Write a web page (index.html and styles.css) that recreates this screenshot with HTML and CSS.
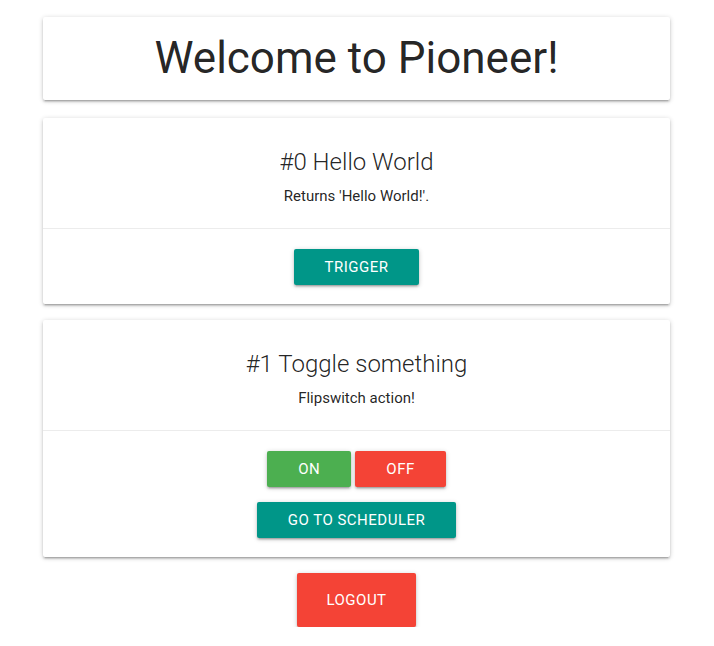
FILE: index.html
```html
<!DOCTYPE html>
<html>
<head>
<meta charset="utf-8">
<title>Pioneer</title>
<link rel="stylesheet" href="styles.css">
</head>
<body>
<div class="page">
  <div class="card header-card">
    <h1 class="page-title">Welcome to Pioneer!</h1>
  </div>

  <div class="card">
    <div class="card-content">
      <h2 class="card-title">#0 Hello World</h2>
      <p class="card-text">Returns 'Hello World!'.</p>
    </div>
    <div class="card-action">
      <button class="btn btn-teal">Trigger</button>
    </div>
  </div>

  <div class="card">
    <div class="card-content">
      <h2 class="card-title">#1 Toggle something</h2>
      <p class="card-text">Flipswitch action!</p>
    </div>
    <div class="card-action">
      <div class="btn-row">
        <button class="btn btn-green">On</button>
        <button class="btn btn-red">Off</button>
      </div>
      <button class="btn btn-teal">Go to scheduler</button>
    </div>
  </div>

  <div class="logout-row">
    <button class="btn btn-large btn-red">Logout</button>
  </div>
</div>
</body>
</html>
```

FILE: styles.css
```css
* { box-sizing: border-box; }

html, body {
  margin: 0;
  padding: 0;
  background: #ffffff;
  font-family: Roboto, "Noto Sans", sans-serif;
  color: rgba(0, 0, 0, 0.87);
}

.page {
  padding: 17px 44px 0 43px;
  display: flex;
  flex-direction: column;
}

.card {
  background: #fff;
  border-radius: 2px;
  box-shadow: 0 2px 2px 0 rgba(0,0,0,0.14), 0 3px 1px -2px rgba(0,0,0,0.12), 0 1px 5px 0 rgba(0,0,0,0.2);
  margin-bottom: 16px;
}

.header-card {
  margin-bottom: 18px;
  height: 83px;
}

.page-title {
  margin: 0;
  font-size: 44px;
  line-height: 83px;
  font-weight: 400;
  text-align: center;
}

.card-content {
  padding: 28px 24px 21px;
  text-align: center;
}

.card-title {
  margin: 0 0 7px;
  font-size: 24px;
  line-height: 32px;
  font-weight: 300;
}

.card-text {
  margin: 0;
  font-size: 15px;
  line-height: 22px;
}

.card-action {
  border-top: 1px solid rgba(160,160,160,0.2);
  padding: 20px 24px 19px;
  display: flex;
  flex-direction: column;
  align-items: center;
  gap: 15px;
}

.btn-row {
  display: flex;
  gap: 4px;
}

.btn {
  border: none;
  border-radius: 2px;
  height: 36px;
  line-height: 36px;
  padding: 0 31px;
  font-family: Roboto, "Noto Sans", sans-serif;
  font-size: 15px;
  letter-spacing: 0.5px;
  text-transform: uppercase;
  color: #fff;
  box-shadow: 0 2px 2px 0 rgba(0,0,0,0.14), 0 3px 1px -2px rgba(0,0,0,0.12), 0 1px 5px 0 rgba(0,0,0,0.2);
  cursor: pointer;
}

.btn-teal { background: #009688; }
.btn-green { background: #4caf50; }
.btn-red { background: #f44336; }

.btn-large {
  height: 54px;
  line-height: 54px;
  padding: 0 29px;
}

.logout-row {
  display: flex;
  justify-content: center;
}
```
